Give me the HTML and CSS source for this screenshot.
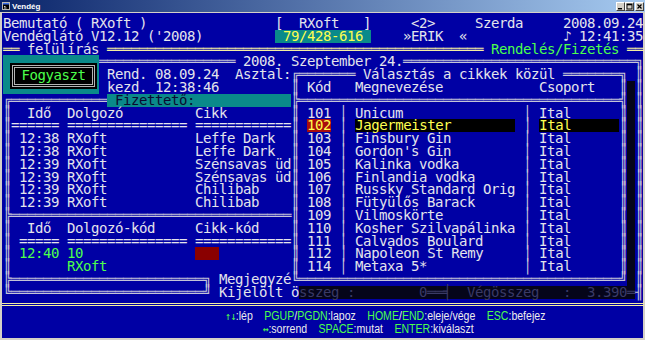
FILE: index.html
```html
<!DOCTYPE html>
<html lang="hu">
<head>
    <meta charset="UTF-8">
    <title>Vendég</title>
    <link rel="stylesheet" href="styles.css">
</head>
<body>
<div class="window">
    <div class="titlebar">
        <svg class="app-icon" width="8" height="8" viewBox="0 0 8 8">
            <rect x="0.5" y="0.5" width="7" height="7" fill="#000" stroke="#b8b8b8"/>
            <rect x="1" y="1" width="6" height="1.5" fill="#3a6ee8"/>
            <path d="M2 4.5h1.5M2 6h2.5" stroke="#fff" stroke-width="0.8"/>
        </svg>
        <span class="title">Vendég</span>
        <div class="cap-btns">
            <span class="cap-btn"><svg width="7" height="7" viewBox="0 0 7 7"><rect x="1" y="5" width="4" height="1.4" fill="#000"/></svg></span>
            <span class="cap-btn"><svg width="7" height="7" viewBox="0 0 7 7"><rect x="1" y="1" width="5" height="5" fill="none" stroke="#000" stroke-width="0.9"/><rect x="1" y="1" width="5" height="1.3" fill="#000"/></svg></span>
            <span class="cap-btn close"><svg width="7" height="7" viewBox="0 0 7 7"><path d="M1.5 1.5l4 4M5.5 1.5l-4 4" stroke="#000" stroke-width="1.2"/></svg></span>
        </div>
    </div>

    <div class="console">
        <div class="screen">
            <div class="text">
<div class="ln">Bemutató ( RXoft )                [  RXoft   ]     &lt;2&gt;     Szerda     2008.09.24</div>
<div class="ln">Vendéglátó V12.12 ('2008)         <span class="cell teal y"> 79/428-616 </span>    »ERIK  «            ♪ 12:41:35</div>
<div class="ln"><span class="yl">══</span> felülírás <span class="yl">═══════════════════════════════════════════════</span> <span class="g">Rendelés/Fizetés</span> <span class="yl">══</span></div>
<div class="ln">            <span class="b">═════════════════</span> 2008. Szeptember 24.<span class="b">═════════════════════════════╗</span></div>
<div class="ln">             Rend. 08.09.24  Asztal:<span class="b">╔═══════</span> Választás a cikkek közül <span class="b">═══════╗</span> <span class="b">║</span></div>
<div class="ln">             kezd. 12:38:46         <span class="b">║</span> Kód   Megnevezése            Csoport   <span class="b">║</span><span class="cell sh"> </span><span class="b">║</span></div>
<div class="ln"><span class="b">╔════════════</span><span class="cell teal dk"> Fizettető:            </span><span class="b">╠════════════════════════════════════════╣</span><span class="cell sh"> </span><span class="b">║</span></div>
<div class="ln"><span class="b">║</span>  Idő  Dolgozó         Cikk        <span class="b">║</span> 101 <span class="b">│</span> Unicum               <span class="b">│</span> Ital      <span class="b">║</span><span class="cell sh"> </span><span class="b">║</span></div>
<div class="ln"><span class="b">║</span>====== =============== ============<span class="b">║</span> <span class="cell hot">102</span> <span class="b">│</span> <span class="cell sel">Jagermeister        </span> <span class="b">│</span> <span class="cell sel">Ital      </span><span class="b">║</span><span class="cell sh"> </span><span class="b">║</span></div>
<div class="ln"><span class="b">║</span> 12:38 RXoft           Leffe Dark  <span class="b">║</span> 103 <span class="b">│</span> Finsbury Gin         <span class="b">│</span> Ital      <span class="b">║</span><span class="cell sh"> </span><span class="b">║</span></div>
<div class="ln"><span class="b">║</span> 12:38 RXoft           Leffe Dark  <span class="b">║</span> 104 <span class="b">│</span> Gordon's Gin         <span class="b">│</span> Ital      <span class="b">║</span><span class="cell sh"> </span><span class="b">║</span></div>
<div class="ln"><span class="b">║</span> 12:39 RXoft           Szénsavas üd<span class="b">║</span> 105 <span class="b">│</span> Kalinka vodka        <span class="b">│</span> Ital      <span class="b">║</span><span class="cell sh"> </span><span class="b">║</span></div>
<div class="ln"><span class="b">║</span> 12:39 RXoft           Szénsavas üd<span class="b">║</span> 106 <span class="b">│</span> Finlandia vodka      <span class="b">│</span> Ital      <span class="b">║</span><span class="cell sh"> </span><span class="b">║</span></div>
<div class="ln"><span class="b">║</span> 12:39 RXoft           Chilibab    <span class="b">║</span> 107 <span class="b">│</span> Russky Standard Orig <span class="b">│</span> Ital      <span class="b">║</span><span class="cell sh"> </span><span class="b">║</span></div>
<div class="ln"><span class="b">║</span> 12:39 RXoft           Chilibab    <span class="b">║</span> 108 <span class="b">│</span> Fütyülős Barack      <span class="b">│</span> Ital      <span class="b">║</span><span class="cell sh"> </span><span class="b">║</span></div>
<div class="ln"><span class="b">╠═══════════════════════════════════║</span> 109 <span class="b">│</span> Vilmoskörte          <span class="b">│</span> Ital      <span class="b">║</span><span class="cell sh"> </span><span class="b">║</span></div>
<div class="ln"><span class="b">║</span>  Idő  Dolgozó-kód     Cikk-kód    <span class="b">║</span> 110 <span class="b">│</span> Kosher Szilvapálinka <span class="b">│</span> Ital      <span class="b">║</span><span class="cell sh"> </span><span class="b">║</span></div>
<div class="ln"><span class="b">║</span> ===== =============== ============<span class="b">║</span> 111 <span class="b">│</span> Calvados Boulard     <span class="b">│</span> Ital      <span class="b">║</span><span class="cell sh"> </span><span class="b">║</span></div>
<div class="ln"><span class="b">║</span> <span class="g">12:40</span> <span class="g">10</span>              <span class="cell redbox">   </span>         <span class="b">║</span> 112 <span class="b">│</span> Napoleon St Remy     <span class="b">│</span> Ital      <span class="b">║</span><span class="cell sh"> </span><span class="b">║</span></div>
<div class="ln"><span class="b">║</span>       <span class="g">RXoft</span>                       <span class="b">║</span> 114 <span class="b">│</span> Metaxa 5*            <span class="b">│</span> Ital      <span class="b">║</span><span class="cell sh"> </span><span class="b">║</span></div>
<div class="ln"><span class="b">╠════════════════════════╗</span> Megjegyzé<span class="b">╚════════════════════════════════════════╝</span><span class="cell sh"> </span><span class="b">║</span></div>
<div class="ln"><span class="b">╚════════════════════════╝</span> Kijelölt ö<span class="cell sh">sszeg :        0══╡  Végösszeg   :  3.390═</span><span class="b">╢</span></div>
            </div>
            <div class="fogyaszt">
                <div class="fog-frame"><div class="fog-inner">Fogyaszt</div></div>
            </div>
        </div>

        <div class="footer">
            <div class="rule"></div>
            <div class="keys keys-top"><span class="keys-line"><span class="key arrow">↑↓</span>:lép<span class="gap"></span><span class="key">PGUP</span>/<span class="key">PGDN</span>:lapoz<span class="gap"></span><span class="key">HOME</span>/<span class="key">END</span>:eleje/vége<span class="gap"></span><span class="key">ESC</span>:befejez</span></div>
            <div class="keys keys-bottom"><span class="keys-line"><span class="key arrow">↔</span>:sorrend<span class="gap"></span><span class="key">SPACE</span>:mutat<span class="gap"></span><span class="key">ENTER</span>:kiválaszt</span></div>
        </div>
    </div>
</div>
</body>
</html>
```

FILE: styles.css
```css
* {
    box-sizing: border-box;
}
body {
    margin: 0;
    background-color: #d4d0c8;
}
.window {
    width: 645px;
    height: 340px;
    background-color: #d4d0c8;
    overflow: hidden;
}

/* title bar, classic gradient */
.titlebar {
    height: 12px;
    display: flex;
    align-items: center;
    padding: 0 1px 0 2px;
    background: linear-gradient(to right, #0a246a, #a6caf0);
}
.app-icon {
    display: block;
    margin-right: 2px;
}
.title {
    font-family: "Liberation Sans", Arial, sans-serif;
    font-weight: bold;
    font-size: 8px;
    color: #fff;
}
.cap-btns {
    margin-left: auto;
    display: flex;
}
.cap-btn {
    width: 9px;
    height: 9px;
    display: flex;
    align-items: center;
    justify-content: center;
    background-color: #d4d0c8;
    border: 1px solid;
    border-color: #fff #404040 #404040 #fff;
}
.cap-btn.close {
    margin-left: 1px;
}

/* text screen */
.console {
    margin: 1px 2px 0 2px;
    height: 325px;
    padding: 4px 0 0 1px;
    background-color: #0000a4;
}
.screen {
    display: grid;
    grid-template-columns: repeat(80, 8px);
    grid-template-rows: repeat(22, 12.8px);
}
.text {
    grid-area: 1 / 1 / 23 / 81;
    font-family: "DejaVu Sans Mono", monospace;
    font-size: 14px;
    letter-spacing: -0.4287px;
    line-height: 12.8px;
    color: #e4e4ec;
}
.ln {
    height: 12.8px;
    white-space: pre;
}
.cell {
    display: inline-block;
    height: 12.8px;
    vertical-align: top;
}
.b {
    color: #c4c4d8;
}
.yl {
    color: #f4eea0;
}
.g {
    color: #4cff4c;
}
.y {
    color: #ffff50;
}
.teal {
    background-color: #0a8a8a;
}
.dk {
    color: #0a0a30;
}
.sel {
    background-color: #000;
    color: #ffff50;
}
.hot {
    background-color: #a80c0c;
    color: #ffff50;
}
.redbox {
    background-color: #8a0000;
}
.sh {
    background-color: #05051a;
    color: #3a3a66;
}

.fogyaszt {
    grid-area: 4 / 1 / 7 / 13;
    background-color: #0a8a8a;
    padding: 8px 2px 5px 7px;
}
.fog-frame {
    height: 100%;
    background-color: #000;
    padding: 2px;
}
.fog-inner {
    height: 100%;
    border: 3px double #b4b4b4;
    font-family: "DejaVu Sans Mono", monospace;
    font-size: 14px;
    letter-spacing: -0.4287px;
    line-height: 15px;
    text-align: center;
    color: #4cff4c;
}

/* key help */
.footer {
    font-family: "Liberation Sans", Arial, sans-serif;
    font-size: 12px;
    line-height: 12.8px;
    color: #ececec;
}
.rule {
    height: 3px;
    margin: 4px -1px 4.8px;
    border-top: 1px solid #f4eea0;
    border-bottom: 1px solid #f4eea0;
}
.keys {
    height: 12.8px;
    white-space: pre;
}
.keys-line {
    display: inline-block;
    transform: scaleX(0.88);
    transform-origin: 0 50%;
}
.keys-top {
    padding-left: 222px;
}
.keys-bottom {
    padding-left: 260px;
}
.key {
    color: #4cff4c;
}
.arrow {
    font-family: "DejaVu Sans Mono", monospace;
    font-size: 11px;
    letter-spacing: -0.5px;
}
.gap {
    display: inline-block;
    width: 13px;
}
```
